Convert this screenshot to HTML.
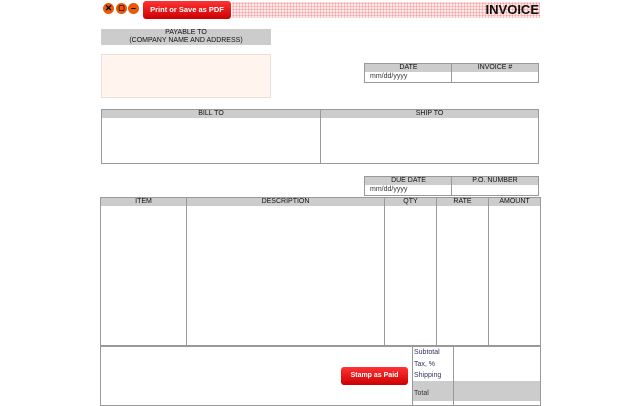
<!DOCTYPE html><html><head><style>
body{margin:0;width:640px;height:400px;overflow:hidden;background:#fff;font-family:"Liberation Sans",sans-serif;position:relative}
div{position:absolute;box-sizing:border-box}
.h{background:#ccc;font-size:7px;text-align:center;color:#111;line-height:8px}
.b{border:1px solid #999}
.t{font-size:7px;color:#333}
.ic{width:11px;height:11px;border-radius:50%;background:#e8590c;top:3px;font-size:9px;line-height:11px;text-align:center;color:#000;font-weight:bold}
</style></head><body>
<div class="ic" style="left:103px">✕</div>
<div class="ic" style="left:116px;font-size:7px">▢</div>
<div class="ic" style="left:128px">–</div>
<div style="left:143px;top:1px;width:88px;height:18px;background:linear-gradient(#f33,#c00);border-radius:3px;color:#fff;font-size:7.5px;font-weight:bold;text-align:center;line-height:18px">Print or Save as PDF</div>
<div style="left:232px;top:2px;width:308px;height:16px;background-image:radial-gradient(#f3a0a0 45%,transparent 50%);background-size:3px 3px;background-color:#fde8e8"></div>
<div style="left:450px;top:2px;width:89px;text-align:right;font-size:13px;font-weight:bold;color:#111;line-height:16px">INVOICE</div>
<div class="h" style="left:101px;top:29px;width:170px;height:16px;padding-top:0">PAYABLE TO<br>(COMPANY NAME AND ADDRESS)</div>
<div class="b" style="left:101px;top:54px;width:170px;height:44px;background:#fff5ee;border-color:#e8e0da"></div>
<div class="b" style="left:364px;top:63px;width:175px;height:20px"></div>
<div class="h" style="left:365px;top:64px;width:87px;height:8px">DATE</div>
<div class="h" style="left:452px;top:64px;width:86px;height:8px">INVOICE #</div>
<div style="left:451px;top:63px;width:1px;height:20px;background:#999"></div>
<div class="t" style="left:370px;top:73px">mm/dd/yyyy</div>
<div class="b" style="left:101px;top:109px;width:438px;height:55px"></div>
<div class="h" style="left:102px;top:110px;width:218px;height:8px">BILL TO</div>
<div class="h" style="left:321px;top:110px;width:217px;height:8px">SHIP TO</div>
<div style="left:320px;top:109px;width:1px;height:55px;background:#999"></div>
<div class="b" style="left:364px;top:176px;width:175px;height:20px"></div>
<div class="h" style="left:365px;top:177px;width:87px;height:8px">DUE DATE</div>
<div class="h" style="left:452px;top:177px;width:86px;height:8px">P.O. NUMBER</div>
<div style="left:451px;top:176px;width:1px;height:20px;background:#999"></div>
<div class="t" style="left:370px;top:186px">mm/dd/yyyy</div>
<div class="b" style="left:100px;top:197px;width:441px;height:149px"></div>
<div class="h" style="left:101px;top:198px;width:85px;height:8px">ITEM</div>
<div class="h" style="left:187px;top:198px;width:197px;height:8px">DESCRIPTION</div>
<div class="h" style="left:385px;top:198px;width:51px;height:8px">QTY</div>
<div class="h" style="left:437px;top:198px;width:51px;height:8px">RATE</div>
<div class="h" style="left:489px;top:198px;width:51px;height:8px">AMOUNT</div>
<div style="left:186px;top:197px;width:1px;height:149px;background:#999"></div>
<div style="left:384px;top:197px;width:1px;height:149px;background:#999"></div>
<div style="left:436px;top:197px;width:1px;height:149px;background:#999"></div>
<div style="left:488px;top:197px;width:1px;height:149px;background:#999"></div>
<div class="b" style="left:100px;top:346px;width:441px;height:60px"></div>
<div style="left:412px;top:346px;width:1px;height:60px;background:#999"></div>
<div style="left:453px;top:346px;width:1px;height:60px;background:#999"></div>
<div style="left:413px;top:381px;width:127px;height:20px;background:#ccc"></div>
<div style="left:453px;top:381px;width:1px;height:20px;background:#999"></div>
<div class="t" style="left:414px;top:349px;color:#336">Subtotal</div>
<div class="t" style="left:414px;top:361px;color:#336">Tax, %</div>
<div class="t" style="left:414px;top:372px;color:#336">Shipping</div>
<div class="t" style="left:414px;top:390px">Total</div>
<div style="left:341px;top:367px;width:67px;height:18px;background:linear-gradient(#f33,#c00);border-radius:3px;color:#fff;font-size:7px;font-weight:bold;text-align:center;line-height:18px">Stamp as Paid</div>
</body></html>
